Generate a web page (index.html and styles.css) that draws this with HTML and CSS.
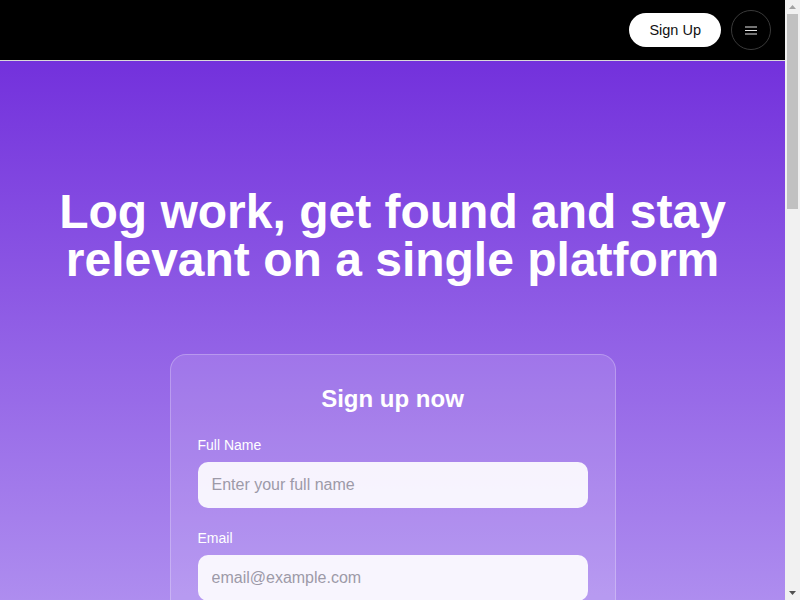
FILE: index.html
```html
<!DOCTYPE html>
<html lang="en">
<head>
<meta charset="utf-8">
<title>Sign up</title>
<link rel="stylesheet" href="styles.css">
</head>
<body>
<header class="topbar">
  <button class="btn-signup" type="button">Sign Up</button>
  <button class="btn-menu" type="button" aria-label="Menu">
    <svg width="12" height="9" viewBox="0 0 12 9" aria-hidden="true">
      <path d="M0 1h12M0 4.5h12M0 8h12" stroke="#e6e6e6" stroke-width="1.2" fill="none"/>
    </svg>
  </button>
</header>
<main class="hero">
  <h1 class="hero-title">Log work, get found and stay relevant on a single platform</h1>
  <form class="card">
    <h2 class="card-title">Sign up now</h2>
    <div class="field">
      <label class="label" for="name">Full Name</label>
      <input class="input" id="name" type="text" placeholder="Enter your full name">
    </div>
    <div class="field">
      <label class="label" for="email">Email</label>
      <input class="input" id="email" type="email" placeholder="email@example.com">
    </div>
    <div class="field">
      <label class="label" for="pw">Password</label>
      <input class="input" id="pw" type="password" placeholder="Create a password">
    </div>
    <button class="btn-submit" type="button">Create account</button>
  </form>
</main>
<div class="scrollbar" aria-hidden="true">
  <div class="sb-btn">
    <svg width="7" height="4" viewBox="0 0 7 4"><path d="M0 4L3.5 0L7 4z" fill="#a3a3a3"/></svg>
  </div>
  <div class="sb-track"><div class="sb-thumb"></div></div>
  <div class="sb-btn">
    <svg width="7" height="4" viewBox="0 0 7 4"><path d="M0 0L3.5 4L7 0z" fill="#505050"/></svg>
  </div>
</div>
</body>
</html>
```

FILE: styles.css
```css
* { box-sizing: border-box; }
html, body { margin: 0; padding: 0; }
body {
  font-family: "Liberation Sans", Arial, sans-serif;
  background: #000;
  margin-right: 15px;
}
.scrollbar {
  position: fixed;
  top: 0;
  right: 0;
  width: 15px;
  height: 100vh;
  background: #f1f1f1;
  display: flex;
  flex-direction: column;
}
.sb-btn {
  height: 14px;
  display: flex;
  align-items: center;
  justify-content: center;
}
.sb-btn svg { display: block; }
.sb-track {
  flex: 1;
  padding: 0 2px;
}
.sb-thumb {
  height: 195px;
  background: #c1c1c1;
}
.topbar {
  height: 61px;
  background: #000;
  border-bottom: 1px solid #d9d9d9;
  display: flex;
  align-items: center;
  justify-content: flex-end;
  padding: 0 14px 0 0;
  gap: 10px;
}
.btn-signup {
  height: 34px;
  padding: 0 20px;
  border: none;
  border-radius: 17px;
  background: #fff;
  color: #111;
  font-family: inherit;
  font-size: 14.5px;
  cursor: pointer;
}
.btn-menu {
  width: 40px;
  height: 40px;
  border-radius: 50%;
  border: 1px solid #3a3a3a;
  background: #000;
  display: flex;
  align-items: center;
  justify-content: center;
  padding: 0;
  cursor: pointer;
}
.btn-menu svg { display: block; }
.hero {
  min-height: 1690px;
  background: linear-gradient(180deg, #7331dc 0px, #ae8def 540px, #f1ebfd 1690px);
  padding: 127px 24px 200px;
  display: flex;
  flex-direction: column;
  align-items: center;
}
.hero-title {
  margin: 0;
  font-size: 48px;
  line-height: 48px;
  font-weight: 700;
  color: #fff;
  text-align: center;
  max-width: 700px;
}
.card {
  margin-top: 70px;
  width: 446px;
  padding: 30px 27px 32px;
  border-radius: 16px;
  background: rgba(255, 255, 255, 0.12);
  border: 1px solid rgba(255, 255, 255, 0.25);
  display: flex;
  flex-direction: column;
  gap: 20px;
}
.card-title {
  margin: 0 0 1px;
  font-size: 24px;
  line-height: 1.2;
  font-weight: 700;
  color: #fff;
  text-align: center;
}
.field {
  display: flex;
  flex-direction: column;
  gap: 7px;
}
.label {
  font-size: 14px;
  line-height: 20px;
  color: #fff;
}
.input {
  height: 46px;
  border: none;
  border-radius: 10px;
  background: rgba(255, 255, 255, 0.9);
  padding: 0 14px;
  font-family: inherit;
  font-size: 16px;
  color: #222;
  outline: none;
}
.input::placeholder { color: #9d9aa8; }
.btn-submit {
  height: 46px;
  border: none;
  border-radius: 10px;
  background: #000;
  color: #fff;
  font-family: inherit;
  font-size: 16px;
  font-weight: 700;
}
```
